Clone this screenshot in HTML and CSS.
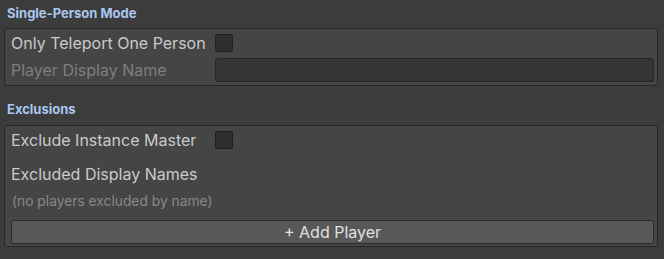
FILE: index.html
```html
<!DOCTYPE html>
<html>
<head>
<meta charset="utf-8">
<link rel="stylesheet" href="styles.css">
</head>
<body>
<div class="panel">
  <div class="title title-first">Single-Person Mode</div>
  <div class="box">
    <div class="row row-check">
      <span class="label">Only Teleport One Person</span>
      <span class="check"></span>
    </div>
    <div class="row row-field">
      <span class="label label-disabled">Player Display Name</span>
      <span class="field"></span>
    </div>
  </div>
  <div class="title title-second">Exclusions</div>
  <div class="box">
    <div class="row row-check">
      <span class="label">Exclude Instance Master</span>
      <span class="check"></span>
    </div>
    <div class="row row-text">
      <span class="label">Excluded Display Names</span>
    </div>
    <div class="row row-note">
      <span class="note">(no players excluded by name)</span>
    </div>
    <div class="button">+ Add Player</div>
  </div>
</div>
</body>
</html>
```
FILE: styles.css
```css
html, body {
  margin: 0;
  padding: 0;
  background: #3c3c3c;
}
body {
  width: 664px;
  height: 259px;
  overflow: hidden;
  font-family: Inter, "Noto Sans", sans-serif;
  color: #cacaca;
}
.panel {
  padding: 0 6px 0 4px;
}
.title {
  font-weight: 700;
  font-size: 13px;
  line-height: 20px;
  color: #a9c7ee;
  padding-left: 3px;
}
.title-first {
  padding-top: 3px;
  padding-bottom: 5px;
}
.title-second {
  padding-top: 13px;
  padding-bottom: 6px;
}
.box {
  background: #454545;
  border: 1px solid #272727;
  border-radius: 3px;
  padding: 4px 3px 3px 6px;
}
.row {
  display: flex;
  align-items: center;
}
.label {
  width: 204px;
  flex: none;
  font-size: 16px;
  white-space: nowrap;
}
.label-disabled {
  color: #7e7e7e;
}
.row-check {
  height: 20px;
}
.check {
  width: 16px;
  height: 16px;
  background: #2e2e2e;
  border: 1px solid #202020;
  border-radius: 2px;
  margin-top: -1px;
}
.row-field {
  margin-top: 5px;
  height: 24px;
}
.field {
  flex: 1;
  height: 22px;
  background: #343434;
  border: 1px solid #262626;
  border-radius: 3px;
}
.row-text {
  margin-top: 12px;
  height: 24px;
}
.row-note {
  margin-top: 5px;
  height: 20px;
}
.note {
  font-size: 13.8px;
  color: #888888;
  padding-left: 1px;
}
.button {
  margin-top: 9px;
  margin-bottom: -1px;
  height: 22px;
  line-height: 22px;
  text-align: center;
  background: #585858;
  border: 1px solid #2b2b2b;
  border-radius: 3px;
  font-size: 16px;
  color: #e0e0e0;
}
```
